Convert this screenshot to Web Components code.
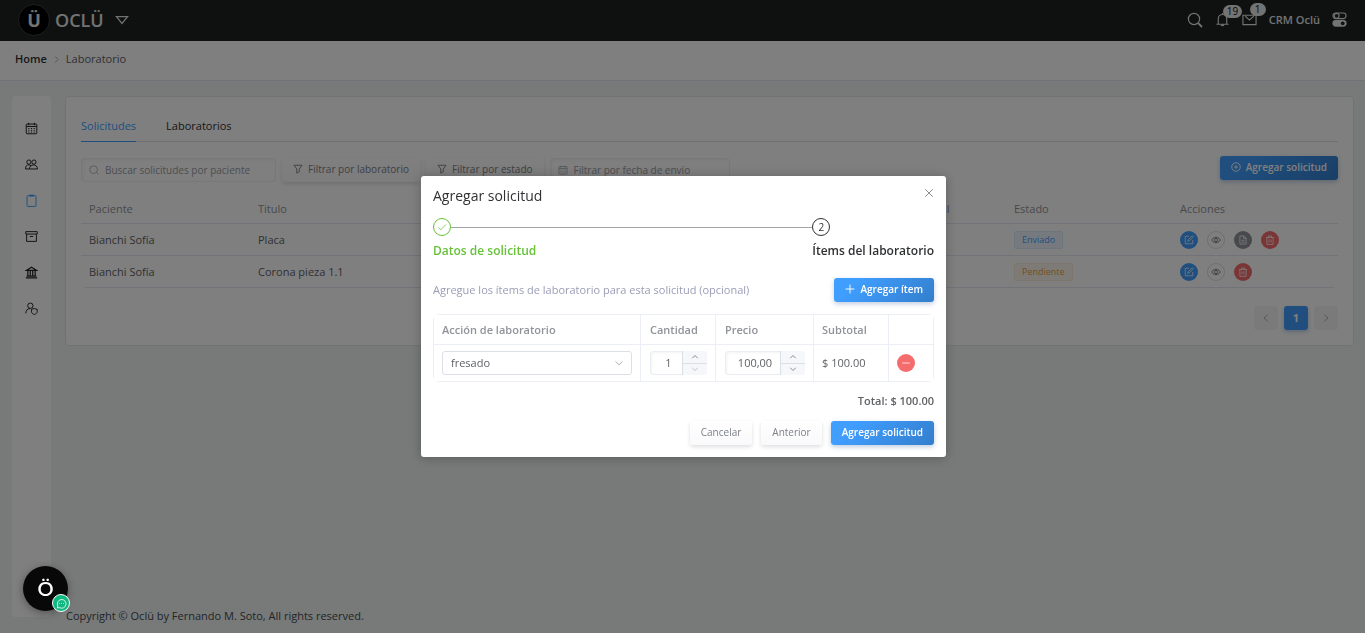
<!DOCTYPE html>
<html lang="es">
<head>
<meta charset="utf-8">
<meta name="viewport" content="width=device-width, initial-scale=1">
<title>Oclü - Laboratorio</title>
<style>
  html, body { margin: 0; }
  body {
    font-family: "Open Sans", "Noto Sans", sans-serif;
    font-size: 11px;
    line-height: 16px;
    color: #606266;
    background: #f0f4f2;
  }
</style>
</head>
<body>
<lab-app></lab-app>

<script>
const ICONS = {
  search: '<circle cx="7" cy="7" r="5.6"/><path d="M11.2 11.2 15 15" stroke-width="1.8"/>',
  searchThin: '<circle cx="7.4" cy="7.4" r="6.2"/><path d="M12 12l3 3"/>',
  bell: '<path d="M1.5 13h13M3.5 13V7.2a4.5 4.5 0 0 1 9 0V13M8 1v1.7M6.6 13.6a1.5 1.5 0 0 0 2.8 0"/>',
  mail: '<path d="M1 3.5h14v10H1zM3.500 4.500 8 8.600l4.500-4.100"/>',
  toggles: '<rect x="1" y="1" width="14" height="6" rx="3"/><circle cx="5" cy="4" r="2.6"/><rect x="1" y="9" width="14" height="6" rx="3" fill="currentColor"/><circle cx="11.4" cy="12" r="2" fill="#1c2220" stroke="none"/>',
  triangle: '<path d="M1.6 4.2h12.8L8 12z"/>',
  chevronRight: '<path d="M5.5 2.5 11 8l-5.500 5.500"/>',
  chevronLeft: '<path d="M10.500 2.500 5 8l5.500 5.500"/>',
  chevronDown: '<path d="M2.500 5.500 8 11l5.500-5.500"/>',
  chevronUp: '<path d="M2.500 10.500 8 5l5.500 5.500"/>',
  calendar: '<rect x="1.500" y="2.500" width="13" height="12" rx="1"/><path d="M1.500 5.500h13M4.500 1v3M11.500 1v3"/><path d="M4 8h1.400M7.300 8h1.400M10.600 8H12M4 10.200h1.400M7.300 10.200h1.400M10.600 10.200H12M4 12.400h1.400M7.300 12.400h1.400M10.600 12.400H12" stroke-width="1.200"/>',
  users: '<circle cx="4.800" cy="5" r="2.600"/><circle cx="11" cy="5" r="2.600"/><path d="M.600 13.500c0-3.200 1.500-5.200 4-5.200 1.300 0 2.200.500 3 1.400M.600 13.500h4.600M5.400 13.500c.2-3.200 2.200-5 5-5s4.800 1.800 5 5z"/>',
  clipboard: '<rect x="2.500" y="2" width="11" height="13.300" rx="1"/><path d="M5.500 2h5" stroke-width="2.400"/>',
  archive: '<path d="M1 2h14v3H1zM2 5v9h12V5M6 8h4"/>',
  bank: '<path d="M1.500 5.500 8 1.500l6.500 4zM1 14.500h14M2 12.500h12M3.500 6v6M6.500 6v6M9.500 6v6M12.500 6v6" stroke-width="1.500"/>',
  userShield: '<circle cx="6.600" cy="4.600" r="3.300"/><path d="M1 14c0-3.600 2-5.600 5-6M8 9l3.500-1 3.500 1v3c0 1.500-1.500 2.700-3.500 3.500C9.500 14.700 8 13.500 8 12z"/>',
  filter: '<path d="M1.500 2h13L10 8v4.500l-4 2V8z"/>',
  plusCircle: '<circle cx="8" cy="8" r="6.800"/><path d="M8 5v6M5 8h6"/>',
  plus: '<path d="M8 1v14M1 8h14"/>',
  minus: '<path d="M2 8h12"/>',
  close: '<path d="M2 2l12 12M14 2 2 14"/>',
  check: '<path d="M2 8.500l4 4 8-8.500"/>',
  edit: '<path d="M8 2H2v12h12V8M6 10l1-3 6.500-6 1.500 1.500L9 9z"/>',
  eye: '<path d="M1 8c3.500-5.600 10.500-5.600 14 0-3.500 5.600-10.500 5.600-14 0z"/><circle cx="8" cy="8" r="2.500"/>',
  doc: '<path d="M3 1.500h6.500L13 5v9.500H3zM9 1.500V5.500h4M5.500 8.500h5M5.500 11.500h5"/>',
  trash: '<path d="M1.500 4h13M5.500 4V1.500h5V4M3 4v11h10V4M6.300 7v5M9.700 7v5"/>',
  chat: '<path d="M2 14.500l.600-3.300A6.300 6.300 0 1 1 5.200 14z"/><path d="M5 8h.800M7.600 8h.800M10.200 8h.800" stroke-width="1.600"/>'
};

/* Registers an element whose shadow root is cloned from a template. */
function define(name, html, setup) {
  const tpl = document.createElement('template');
  tpl.innerHTML = html;
  customElements.define(name, class extends HTMLElement {
    constructor() {
      super();
      this.attachShadow({ mode: 'open' }).append(tpl.content.cloneNode(true));
    }
    connectedCallback() {
      if (setup && !this.ready) { this.ready = true; setup(this, this.shadowRoot); }
    }
  });
}

define('ui-icon', `
<style>
  :host { display: inline-flex; flex: none; width: var(--size, 12px); height: var(--size, 12px); }
  svg { width: 100%; height: 100%; fill: none; stroke: currentColor; stroke-width: var(--stroke, 1.2); }
</style>
<svg viewBox="0 0 16 16" aria-hidden="true"></svg>`,
(el, root) => { root.querySelector('svg').innerHTML = ICONS[el.getAttribute('name')]; });

define('ui-button', `
<style>
  :host { display: inline-flex; flex: none; }
  button {
    display: flex; align-items: center; gap: 5px;
    box-sizing: border-box; height: 24px; padding: 0 11px 2px; border: 0; border-radius: 3px;
    font: inherit; font-size: 10px; line-height: 16px; color: #7d808a; white-space: nowrap;
    background: linear-gradient(#fff, #f9f9fb); box-shadow: 0 2px 4px rgba(0,0,0,.13);
  }
  :host([primary]) button {
    color: #fff; font-weight: 600; background: linear-gradient(135deg, #409eff 20%, #337ecc);
    box-shadow: 0 2px 5px rgba(50,90,150,.3);
  }
  ::slotted(ui-icon) { --size: 10px; --stroke: 1.5; }
</style>
<button type="button"><slot></slot></button>`);

define('round-button', `
<style>
  :host { display: inline-flex; flex: none; }
  button {
    display: grid; place-items: center; box-sizing: border-box; width: 18px; height: 18px; padding: 0;
    border: 1px solid transparent; border-radius: 50%; color: #fff; background: #909399;
    --size: 10px;
  }
  :host([tone=edit]) button { background: #409eff; }
  :host([tone=plain]) button { background: #fff; border-color: #dcdfe6; color: #606266; }
  :host([tone=danger]) button { background: #f56c6c; }
</style>
<button type="button"><ui-icon></ui-icon></button>`,
(el, root) => {
  root.querySelector('button').setAttribute('aria-label', el.getAttribute('label'));
  const icon = document.createElement('ui-icon');
  icon.setAttribute('name', el.getAttribute('icon'));
  root.querySelector('ui-icon').replaceWith(icon);
});

define('status-tag', `
<style>
  :host {
    display: inline-block; padding: 0 7px; border: 1px solid #d9ecff; border-radius: 2px;
    font-size: 9px; line-height: 16px; color: #409eff; background: #ecf5ff;
  }
  :host([warning]) { color: #e6a23c; background: #fdf6ec; border-color: #faecd8; }
</style>
<slot></slot>`);

define('app-header', `
<style>
  :host {
    display: flex; align-items: center; justify-content: space-between; box-sizing: border-box;
    height: 41px; padding: 0 18px 2px; color: #e4e6e5; background: #1c2220;
  }
  .brand, .tools { display: flex; align-items: center; }
  .logo {
    display: grid; place-items: center; box-sizing: border-box; width: 32px; height: 32px; margin-right: 5px;
    border: 1px solid #3a3f3d; border-radius: 50%; background: #000; font-size: 18px; line-height: 24px; font-weight: 700;
  }
  .name { font-size: 18px; line-height: 24px; font-weight: 600; margin-right: 11px; }
  .brand ui-icon { --size: 14px; --stroke: 1.4; }
  .tools { gap: 12px; --size: 15px; }
  .search { --size: 16px; }
  .user { font-weight: 600; }
  .counted { position: relative; display: flex; }
  .badge {
    position: absolute; left: 8px; top: -7px; padding: 0 4px; border-radius: 8px;
    font-size: 10px; line-height: 13px; color: #111; background: #e4e6e5;
  }
  .counted:nth-child(3) .badge { top: -9px; padding: 0 5px; }
</style>
<div class="brand">
  <div class="logo">Ü</div><div class="name">OCLÜ</div><ui-icon name="triangle"></ui-icon>
</div>
<div class="tools">
  <ui-icon class="search" name="search"></ui-icon>
  <span class="counted"><ui-icon name="bell"></ui-icon><span class="badge">19</span></span>
  <span class="counted"><ui-icon name="mail"></ui-icon><span class="badge">1</span></span>
  <span class="user">CRM Oclü</span>
  <ui-icon name="toggles"></ui-icon>
</div>`);

define('bread-crumb', `
<style>
  :host { display: block; border-bottom: 1px solid #e2e4f0; background: #fff; }
  nav { display: flex; align-items: center; gap: 5px; padding: 10px 15px 13px; }
  a { color: #303133; font-weight: 600; text-decoration: none; }
  ui-icon { --size: 9px; --stroke: 1.6; color: #a0a4ac; }
</style>
<nav aria-label="Ruta"><a href="#">Home</a><ui-icon name="chevronRight"></ui-icon><span>Laboratorio</span></nav>`);

define('side-nav', `
<style>
  :host { display: block; border-radius: 4px; background: #fff; }
  nav { display: flex; flex-direction: column; align-items: center; gap: 23px; padding-top: 26px; }
  a { display: flex; color: #222; --size: 13px; }
  a[aria-current] { color: #409eff; }
</style>
<nav aria-label="Principal">
  <a href="#" aria-label="Agenda"><ui-icon name="calendar"></ui-icon></a>
  <a href="#" aria-label="Pacientes"><ui-icon name="users"></ui-icon></a>
  <a href="#" aria-label="Laboratorio" aria-current="page"><ui-icon name="clipboard"></ui-icon></a>
  <a href="#" aria-label="Inventario"><ui-icon name="archive"></ui-icon></a>
  <a href="#" aria-label="Caja"><ui-icon name="bank"></ui-icon></a>
  <a href="#" aria-label="Usuarios"><ui-icon name="userShield"></ui-icon></a>
</nav>`);

define('search-field', `
<style>
  :host { display: flex; box-sizing: border-box; height: 24px; border: 1px solid #f0f1f4; border-radius: 3px;
    background: #fff; box-shadow: inset 1px 1px 3px rgba(0,0,0,.06); }
  label { display: flex; flex: 1; align-items: center; gap: 6px; padding: 0 7px; color: #a0a3aa; --size: 10px; }
  input { flex: 1; min-width: 0; padding: 0; border: 0; outline: 0; background: none; font: inherit; font-size: 10px; line-height: 16px; }
  input::placeholder { color: #999ca4; opacity: 1; }
</style>
<label><ui-icon></ui-icon><input type="text"></label>`,
(el, root) => {
  const input = root.querySelector('input');
  input.placeholder = el.getAttribute('placeholder');
  input.setAttribute('aria-label', input.placeholder);
  const icon = document.createElement('ui-icon');
  icon.setAttribute('name', el.getAttribute('icon'));
  root.querySelector('ui-icon').replaceWith(icon);
});

define('requests-card', `
<style>
  :host { display: block; padding: 21px 15px 15px; border: 1px solid #e1e6ea; border-radius: 4px; background: #fff; }
  .tabs { display: flex; gap: 30px; border-bottom: 1px solid #dfe3e8; }
  .tabs button { margin: 0 0 -1px; padding: 0 0 7px; border: 0; border-bottom: 1px solid transparent;
    background: none; font: inherit; color: #303133; }
  .tabs [aria-selected=true] { color: #409eff; border-color: #409eff; }
  .filters { display: flex; align-items: flex-end; gap: 6px; height: 26px; margin: 14px 0 11px; }
  .filters .patient { width: 195px; }
  .filters .date { width: 180px; }
  .filters [primary] { align-self: flex-start; margin-left: auto; }
  .clip { overflow: hidden; border-radius: 6px; }
  table { width: 100%; border-spacing: 0; table-layout: fixed; }
  th, td { box-sizing: border-box; height: 32px; padding: 0 8px; border-bottom: 1px solid #e4e7f2; text-align: left; }
  th { height: 31px; padding-top: 2px; color: #909399; font-weight: 500; }
  .wide { width: 169px; } .total { width: 90px; } .side { width: 166px; }
  .actions { display: flex; gap: 9px; }
  .pages { display: flex; justify-content: flex-end; gap: 6px; margin-top: 18px; }
  .pages button { display: grid; place-items: center; width: 24px; height: 24px; padding: 0 0 1px; border: 0; border-radius: 3px;
    background: #f4f4f6; color: #a0a4ac; font: inherit; --size: 10px; --stroke: 1.500; }
  .pages [aria-current] { color: #fff; font-weight: 700; background: #409eff; box-shadow: 0 2px 4px rgba(64,120,200,.35); }
</style>
<div class="tabs" role="tablist">
  <button type="button" role="tab" aria-selected="true">Solicitudes</button>
  <button type="button" role="tab" aria-selected="false">Laboratorios</button>
</div>
<div class="filters">
  <search-field class="patient" icon="searchThin" placeholder="Buscar solicitudes por paciente"></search-field>
  <ui-button><ui-icon name="filter"></ui-icon>Filtrar por laboratorio</ui-button>
  <ui-button><ui-icon name="filter"></ui-icon>Filtrar por estado</ui-button>
  <search-field class="date" icon="calendar" placeholder="Filtrar por fecha de envío"></search-field>
  <ui-button primary><ui-icon name="plusCircle"></ui-icon>Agregar solicitud</ui-button>
</div>
<div class="clip">
<table>
  <colgroup><col class="wide"><col><col class="total"><col class="side"><col class="side"></colgroup>
  <thead><tr><th>Paciente</th><th>Titulo</th><th>Total</th><th>Estado</th><th>Acciones</th></tr></thead>
  <tbody>
    <tr><td>Bianchi Sofía</td><td>Placa</td><td></td><td><status-tag>Enviado</status-tag></td>
      <td><div class="actions">
        <round-button tone="edit" icon="edit" label="Editar"></round-button>
        <round-button tone="plain" icon="eye" label="Ver"></round-button>
        <round-button icon="doc" label="Documento"></round-button>
        <round-button tone="danger" icon="trash" label="Eliminar"></round-button>
      </div></td></tr>
    <tr><td>Bianchi Sofía</td><td>Corona pieza 1.1</td><td></td><td><status-tag warning>Pendiente</status-tag></td>
      <td><div class="actions">
        <round-button tone="edit" icon="edit" label="Editar"></round-button>
        <round-button tone="plain" icon="eye" label="Ver"></round-button>
        <round-button tone="danger" icon="trash" label="Eliminar"></round-button>
      </div></td></tr>
  </tbody>
</table>
</div>
<div class="pages">
  <button type="button" aria-label="Anterior"><ui-icon name="chevronLeft"></ui-icon></button>
  <button type="button" aria-current="page">1</button>
  <button type="button" aria-label="Siguiente"><ui-icon name="chevronRight"></ui-icon></button>
</div>`);

define('number-stepper', `
<style>
  :host { display: flex; box-sizing: border-box; height: 24px; overflow: hidden; border-radius: 3px; }
  input { flex: 1; min-width: 0; box-sizing: border-box; padding: 0 0 0 4px; border: 1px solid #ebedf2; border-right: 0;
    border-radius: 3px 0 0 3px; text-align: center; font: inherit; color: #606266; outline: 0;
    background: #fff; box-shadow: inset 1px 1px 3px rgba(0,0,0,.05); }
  div { display: grid; width: 24px; border-left: 1px solid #dcdfe6; }
  button { display: grid; place-items: center; padding: 0; border: 0; background: #f5f7fa; color: #7c7f86; --size: 8px; --stroke: 1.800; }
  button + button { border-top: 1px solid #dcdfe6; }
  button:disabled { color: #b8bbc2; }
</style>
<input type="text" inputmode="decimal">
<div><button type="button" aria-label="Aumentar"><ui-icon name="chevronUp"></ui-icon></button><button type="button" aria-label="Disminuir"><ui-icon name="chevronDown"></ui-icon></button></div>`,
(el, root) => {
  const input = root.querySelector('input');
  input.value = el.getAttribute('value');
  input.setAttribute('aria-label', el.getAttribute('label'));
  root.querySelector('button + button').disabled = el.hasAttribute('at-min');
});

define('step-list', `
<style>
  ol { display: flex; margin: 0; padding: 0; list-style: none; color: #303133; font-size: 12px; font-weight: 600; }
  li:first-child { flex: 1; color: #67c23a; }
  .head { display: flex; align-items: center; margin-bottom: 7px; }
  .mark { display: grid; place-items: center; box-sizing: border-box; width: 18px; height: 18px;
    border: 1px solid; border-radius: 50%; font-size: 10px; line-height: 14px; font-weight: 400; --size: 10px; }
  .rail { flex: 1; height: 1px; background: #a3a5a9; }
</style>
<ol>
  <li><div class="head"><span class="mark"><ui-icon name="check"></ui-icon></span><span class="rail"></span></div>Datos de solicitud</li>
  <li aria-current="step"><div class="head"><span class="mark">2</span></div>Ítems del laboratorio</li>
</ol>`);

define('request-dialog', `
<style>
  :host { display: block; box-sizing: border-box; width: 100%; max-width: 525px; padding: 12px; border-radius: 3px;
    background: #fff; box-shadow: 0 1px 12px rgba(0,0,0,.25); }
  header, .intro, footer { display: flex; align-items: center; justify-content: space-between; }
  header { margin-bottom: 14px; }
  h2 { margin: 0; font-size: 14px; line-height: 16px; font-weight: 400; color: #303133; }
  .close { display: flex; align-self: flex-start; padding: 0; border: 0; background: none; color: #85888e; --size: 10px; --stroke: 1.5; }
  .intro { margin: 19px 0 12px; color: #9a9db5; }
  p { margin: 0; }
  .clip { overflow: hidden; border-radius: 6px; }
  table { width: 100%; border-spacing: 0; table-layout: fixed; border: 1px solid #ebeef5; border-right: 0; border-bottom: 0; box-sizing: border-box; }
  th, td { box-sizing: border-box; height: 30px; padding: 0 8px; border: solid #ebeef5; border-width: 0 1px 1px 0; text-align: left; }
  td { height: 37px; }
  th { color: #909399; font-weight: 600; }
  th:nth-child(2), th:nth-child(3), td:nth-child(2), td:nth-child(3) { padding-left: 9px; }
  .qty { width: 75px; } .price { width: 98px; } .sub { width: 75px; } .del { width: 45px; }
  .select { display: grid; align-items: center; --size: 10px; --stroke: 1.500; }
  .select > * { grid-area: 1 / 1; }
  .select ui-icon { justify-self: end; margin-right: 8px; color: #a8abb2; pointer-events: none; }
  select { appearance: none; box-sizing: border-box; width: 100%; height: 24px; padding: 0 8px; border: 1px solid #dcdfe6;
    border-radius: 3px; background: #fff; font: inherit; color: #606266; }
  .total { margin: 11px 0 12px; text-align: right; font-weight: 600; }
  footer { justify-content: flex-end; gap: 9px; }
  td round-button { vertical-align: middle; }
</style>
<header><h2>Agregar solicitud</h2><button class="close" type="button" aria-label="Cerrar"><ui-icon name="close"></ui-icon></button></header>
<step-list></step-list>
<div class="intro"><p>Agregue los ítems de laboratorio para esta solicitud (opcional)</p>
  <ui-button primary><ui-icon name="plus"></ui-icon>Agregar ítem</ui-button></div>
<div class="clip">
<table>
  <colgroup><col><col class="qty"><col class="price"><col class="sub"><col class="del"></colgroup>
  <thead><tr><th>Acción de laboratorio</th><th>Cantidad</th><th>Precio</th><th>Subtotal</th><th></th></tr></thead>
  <tbody><tr>
    <td><div class="select"><select aria-label="Acción de laboratorio"><option>fresado</option></select><ui-icon name="chevronDown"></ui-icon></div></td>
    <td><number-stepper label="Cantidad" value="1" at-min></number-stepper></td>
    <td><number-stepper label="Precio" value="100,00"></number-stepper></td>
    <td>$ 100.00</td>
    <td><round-button tone="danger" icon="minus" label="Quitar ítem"></round-button></td>
  </tr></tbody>
</table>
</div>
<p class="total">Total: $ 100.00</p>
<footer><ui-button>Cancelar</ui-button><ui-button>Anterior</ui-button><ui-button primary>Agregar solicitud</ui-button></footer>`);

define('chat-launcher', `
<style>
  :host { position: fixed; left: 23px; bottom: 22px; z-index: 3; }
  button { display: grid; place-items: center; width: 45px; height: 45px; padding: 0 0 2px; border: 0; border-radius: 50%;
    color: #fff; background: #080808; box-shadow: 0 2px 8px rgba(0,0,0,.35);
    font: 600 20px/24px Lato, "Open Sans", sans-serif; }
  span { position: absolute; right: -2px; bottom: -1px; display: grid; place-items: center; box-sizing: border-box;
    width: 18px; height: 18px; border: 1px solid #fff; border-radius: 50%; color: #fff; background: #10b981; --size: 11px; }
</style>
<button type="button" aria-label="Abrir chat">Ö<span><ui-icon name="chat"></ui-icon></span></button>`);

define('lab-app', `
<style>
  :host { display: flex; flex-direction: column; min-height: 100vh; }
  .body { flex: 1; display: grid; grid-template-columns: 39px minmax(0, 1fr); gap: 14px; padding: 15px 11px 9px 12px; }
  side-nav { margin-bottom: 7px; }
  main { display: flex; flex-direction: column; justify-content: space-between; }
  .copy { color: #454a52; font-weight: 500; padding-left: 1px; }
  .overlay { position: fixed; inset: 0; z-index: 2; display: grid; place-items: center; padding-left: 2px; background: rgba(0,0,0,.5); }
</style>
<app-header></app-header>
<bread-crumb></bread-crumb>
<div class="body">
  <side-nav></side-nav>
  <main>
    <requests-card></requests-card>
    <div class="copy">Copyright © Oclü by Fernando M. Soto, All rights reserved.</div>
  </main>
</div>
<div class="overlay"><request-dialog role="dialog" aria-modal="true" aria-label="Agregar solicitud"></request-dialog></div>
<chat-launcher></chat-launcher>`);
</script>
</body>
</html>
